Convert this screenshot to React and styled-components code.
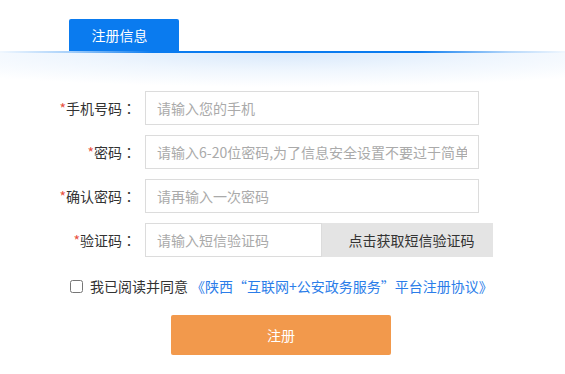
import React from "react";
import styled, { createGlobalStyle } from "styled-components";

const Global = createGlobalStyle`
  html, body { margin: 0; padding: 0; background: #fff; }
  body { font-family: "Noto Sans CJK SC", "Noto Sans", "Liberation Sans", sans-serif; }
  * { box-sizing: border-box; }
`;

const Page = styled.div`
  width: 565px;
  height: 374px;
  overflow: hidden;
  display: flex;
  flex-direction: column;
`;

const TabBar = styled.div`
  padding: 19px 0 0 69px;
  display: flex;
`;

const Tab = styled.div`
  width: 110px;
  height: 32px;
  padding-right: 9px;
  background: #0a7bef;
  color: #fff;
  font-size: 14px;
  line-height: 32px;
  text-align: center;
  border-radius: 2px 2px 0 0;
`;

const Line = styled.div`
  height: 2px;
  background: linear-gradient(90deg, rgba(10,123,239,0.06) 0%, rgba(10,123,239,0.35) 12%, #0a7bef 27%, #0a7bef 74%, rgba(10,123,239,0.3) 90%, rgba(10,123,239,0.06) 100%);
`;

const Body = styled.div`
  padding-top: 38px;
  background: radial-gradient(ellipse 75% 34px at 50% 0, #d9e9fb 0%, rgba(232,242,253,0.7) 50%, rgba(255,255,255,0) 100%) no-repeat;
  display: flex;
  flex-direction: column;
`;

const Rows = styled.div`
  display: flex;
  flex-direction: column;
  gap: 10px;
`;

const Row = styled.div`
  display: flex;
  align-items: center;
  height: 34px;
  gap: 9px;
`;

const Label = styled.label`
  width: 136px;
  text-align: right;
  font-size: 14px;
  color: #333;
  white-space: nowrap;
`;

const Star = styled.span`
  color: #e8523f;
`;

const Colon = styled.span`
  font-family: "Noto Sans CJK TC", "Noto Sans CJK SC", sans-serif;
`;

const Input = styled.input`
  width: ${(p) => p.$w || 334}px;
  height: 34px;
  border: 1px solid #dcdcdc;
  padding: 0 11px;
  font-size: 14px;
  font-family: inherit;
  color: #333;
  outline: none;
  background: #fff;
  &::placeholder { color: #aaa; }
`;

const Group = styled.div`
  display: flex;
`;

const CodeButton = styled.button`
  width: 171px;
  height: 34px;
  border: none;
  background: #e4e4e4;
  color: #333;
  font-size: 14px;
  font-family: inherit;
  padding: 0 0 0 8px;
`;

const Agree = styled.div`
  margin-top: 19px;
  padding-left: 70px;
  display: flex;
  align-items: center;
  height: 20px;
  font-size: 14px;
  color: #333;
`;

const Check = styled.input`
  width: 13px;
  height: 13px;
  margin: 0 7px 0 0;
`;

const Link = styled.a`
  color: #2b7de9;
  text-decoration: none;
  margin-left: 3px;
`;

const Submit = styled.button`
  margin: 19px 0 0 171px;
  width: 220px;
  height: 40px;
  border: none;
  border-radius: 2px;
  background: #f2994c;
  color: #fff;
  font-size: 14px;
  font-family: inherit;
`;

const fields = [
  { label: "手机号码", ph: "请输入您的手机" },
  { label: "密码", ph: "请输入6-20位密码,为了信息安全设置不要过于简单" },
  { label: "确认密码", ph: "请再输入一次密码" },
];

export default function App() {
  return (
    <Page>
      <Global />
      <TabBar>
        <Tab>注册信息</Tab>
      </TabBar>
      <Line />
      <Body>
        <Rows>
          {fields.map((f) => (
            <Row key={f.label}>
              <Label>
                <Star>*</Star>
                {f.label}
                <Colon>：</Colon>
              </Label>
              <Input placeholder={f.ph} />
            </Row>
          ))}
          <Row>
            <Label>
              <Star>*</Star>验证码<Colon>：</Colon>
            </Label>
            <Group>
              <Input $w={177} placeholder="请输入短信验证码" />
              <CodeButton>点击获取短信验证码</CodeButton>
            </Group>
          </Row>
        </Rows>
        <Agree>
          <Check type="checkbox" />
          我已阅读并同意
          <Link href="#">《陕西“互联网+公安政务服务”平台注册协议》</Link>
        </Agree>
        <Submit>注册</Submit>
      </Body>
    </Page>
  );
}
